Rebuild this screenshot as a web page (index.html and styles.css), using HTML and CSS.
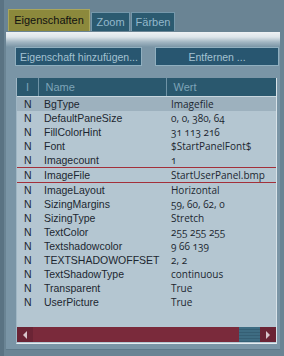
FILE: index.html
```
<!DOCTYPE html>
<html lang="de">
<head>
  <meta charset="UTF-8">
  <title>Eigenschaften</title>
  <link rel="stylesheet" href="styles.css">
</head>
<body>
  <div class="window">
    <!-- Tabs -->
    <div class="tabs">
      <div class="tab active">Eigenschaften</div>
      <div class="tab zoom">Zoom</div>
      <div class="tab farben">Färben</div>
    </div>

    <div class="panel">
      <div class="actions">
        <button class="btn btn-add">Eigenschaft hinzufügen...</button>
        <button class="btn btn-remove">Entfernen ...</button>
      </div>

      <div class="grid-frame">
        <table class="props">
          <colgroup>
            <col class="c-flag">
            <col class="c-name">
            <col class="c-value">
          </colgroup>
          <thead>
            <tr>
              <th>I</th>
              <th>Name</th>
              <th>Wert</th>
            </tr>
          </thead>
          <tbody>
            <tr class="current"><td>N</td><td>BgType</td><td class="val">Imagefile</td></tr>
            <tr><td>N</td><td>DefaultPaneSize</td><td class="val">0, 0, 380, 64</td></tr>
            <tr><td>N</td><td>FillColorHint</td><td class="val">31 113 216</td></tr>
            <tr><td>N</td><td>Font</td><td class="val">$StartPanelFont$</td></tr>
            <tr class="before-mark"><td>N</td><td>Imagecount</td><td class="val">1</td></tr>
            <tr class="marked"><td>N</td><td>ImageFile</td><td class="val">StartUserPanel.bmp</td></tr>
            <tr><td>N</td><td>ImageLayout</td><td class="val">Horizontal</td></tr>
            <tr><td>N</td><td>SizingMargins</td><td class="val">59, 60, 62, 0</td></tr>
            <tr><td>N</td><td>SizingType</td><td class="val">Stretch</td></tr>
            <tr><td>N</td><td>TextColor</td><td class="val">255 255 255</td></tr>
            <tr><td>N</td><td>Textshadowcolor</td><td class="val">9 66 139</td></tr>
            <tr><td>N</td><td>TEXTSHADOWOFFSET</td><td class="val">2, 2</td></tr>
            <tr><td>N</td><td>TextShadowType</td><td class="val">continuous</td></tr>
            <tr><td>N</td><td>Transparent</td><td class="val">True</td></tr>
            <tr><td>N</td><td>UserPicture</td><td class="val">True</td></tr>
          </tbody>
        </table>

        <div class="hscroll">
          <div class="sb-btn">
            <svg width="6" height="8" viewBox="0 0 6 8"><path d="M5 0 L1 4 L5 8 Z" fill="#d9c6cc"/></svg>
          </div>
          <div class="sb-track"></div>
          <div class="sb-thumb"></div>
          <div class="sb-btn">
            <svg width="6" height="8" viewBox="0 0 6 8"><path d="M1 0 L5 4 L1 8 Z" fill="#d9c6cc"/></svg>
          </div>
        </div>
      </div>
    </div>
  </div>
</body>
</html>
```

FILE: styles.css
```
body {
  margin: 0;
  font-family: "Liberation Sans", Arial, sans-serif;
}

.window {
  width: 284px;
  height: 356px;
  box-sizing: border-box;
  padding-top: 9px;
  background: #6a8494;
  border-left: 4px solid #5a7383;
  overflow: hidden;
}

/* tabs */
.tabs {
  display: flex;
  align-items: flex-end;
  gap: 1px;
  padding-left: 4px;
  height: 22px;
}

.tab {
  box-sizing: border-box;
  height: 19px;
  padding-top: 3px;
  font-size: 11px;
  text-align: center;
  color: #93b8cb;
  background: #2b5a70;
  border: 1px solid #7698ab;
  border-bottom: none;
}

.tab.active {
  width: 82px;
  height: 22px;
  padding-top: 4px;
  color: #111;
  background: #8c893c;
  border-color: #a9a65c;
}

.tab.zoom { width: 39px; }
.tab.farben { width: 44px; }

/* panel */
.panel {
  margin: 1px 0 0 2px;
  width: 274px;
  height: 318px;
  box-sizing: border-box;
  padding: 15px 0 0 9px;
  background: linear-gradient(to bottom, #eef2f4 0px, #dde5ea 5px, #a2b6c2 10px, #7a95a6 15px);
  border-bottom: 1px solid #5f7a8a;
}

.actions {
  display: flex;
  gap: 13px;
}

.btn {
  box-sizing: border-box;
  height: 19px;
  padding: 0;
  font-family: "Liberation Sans", Arial, sans-serif;
  font-size: 10.5px;
  white-space: nowrap;
  overflow: hidden;
  color: #a4c2d2;
  background: #285670;
  border: 1px solid #90afbf;
}

.btn-add {
  width: 127px;
  text-align: left;
  padding-left: 4px;
}

.btn-remove {
  width: 124px;
}

/* property grid */
.grid-frame {
  margin: 12px 0 0 1px;
  width: 261px;
  height: 266px;
  box-sizing: border-box;
  display: flex;
  flex-direction: column;
  justify-content: space-between;
  background: #b4c6d1;
  border-left: 1px solid #9fb6c4;
  border-right: 1px solid #d8e2e8;
  border-bottom: 1px solid #e4ecf0;
}

.props {
  width: 100%;
  border-collapse: collapse;
  table-layout: fixed;
}

.c-flag { width: 21px; }
.c-name { width: 128px; }

.props th {
  height: 18px;
  padding: 0 0 0 7px;
  text-align: left;
  font-weight: normal;
  font-size: 11px;
  color: #7ea4b8;
  background: #2a586e;
  border-left: 1px solid #6f93a6;
  border-bottom: 1px solid #c8d6de;
}

.props th:first-child {
  border-left: none;
  padding-left: 9px;
}

.props td {
  height: 14px;
  padding: 0 0 0 6px;
  font-size: 10.5px;
  line-height: 14px;
  color: #1c2730;
  white-space: nowrap;
  overflow: hidden;
}

.props td:first-child {
  padding-left: 7px;
}

.props td.val {
  padding-left: 5px;
  font-family: "Open Sans", "Liberation Sans", sans-serif;
  font-size: 10px;
  font-variant-numeric: oldstyle-nums;
}

.props tr.current td {
  background: #9db1be;
}

.props tr.before-mark td {
  border-bottom: 1px solid #a3303a;
}

.props tr.marked td {
  height: 12px;
  border-bottom: 1px solid #a3303a;
}

/* horizontal scrollbar */
.hscroll {
  display: flex;
  height: 15px;
  margin-bottom: 1px;
}

.sb-btn {
  width: 16px;
  display: flex;
  align-items: center;
  justify-content: center;
  background: #6b2435;
}

.sb-track {
  flex: 1;
  background: #7a2a3b;
}

.sb-thumb {
  width: 21px;
  background: repeating-linear-gradient(to bottom, #3e6c82 0px, #3e6c82 2px, #355f74 2px, #355f74 3px);
}
```
